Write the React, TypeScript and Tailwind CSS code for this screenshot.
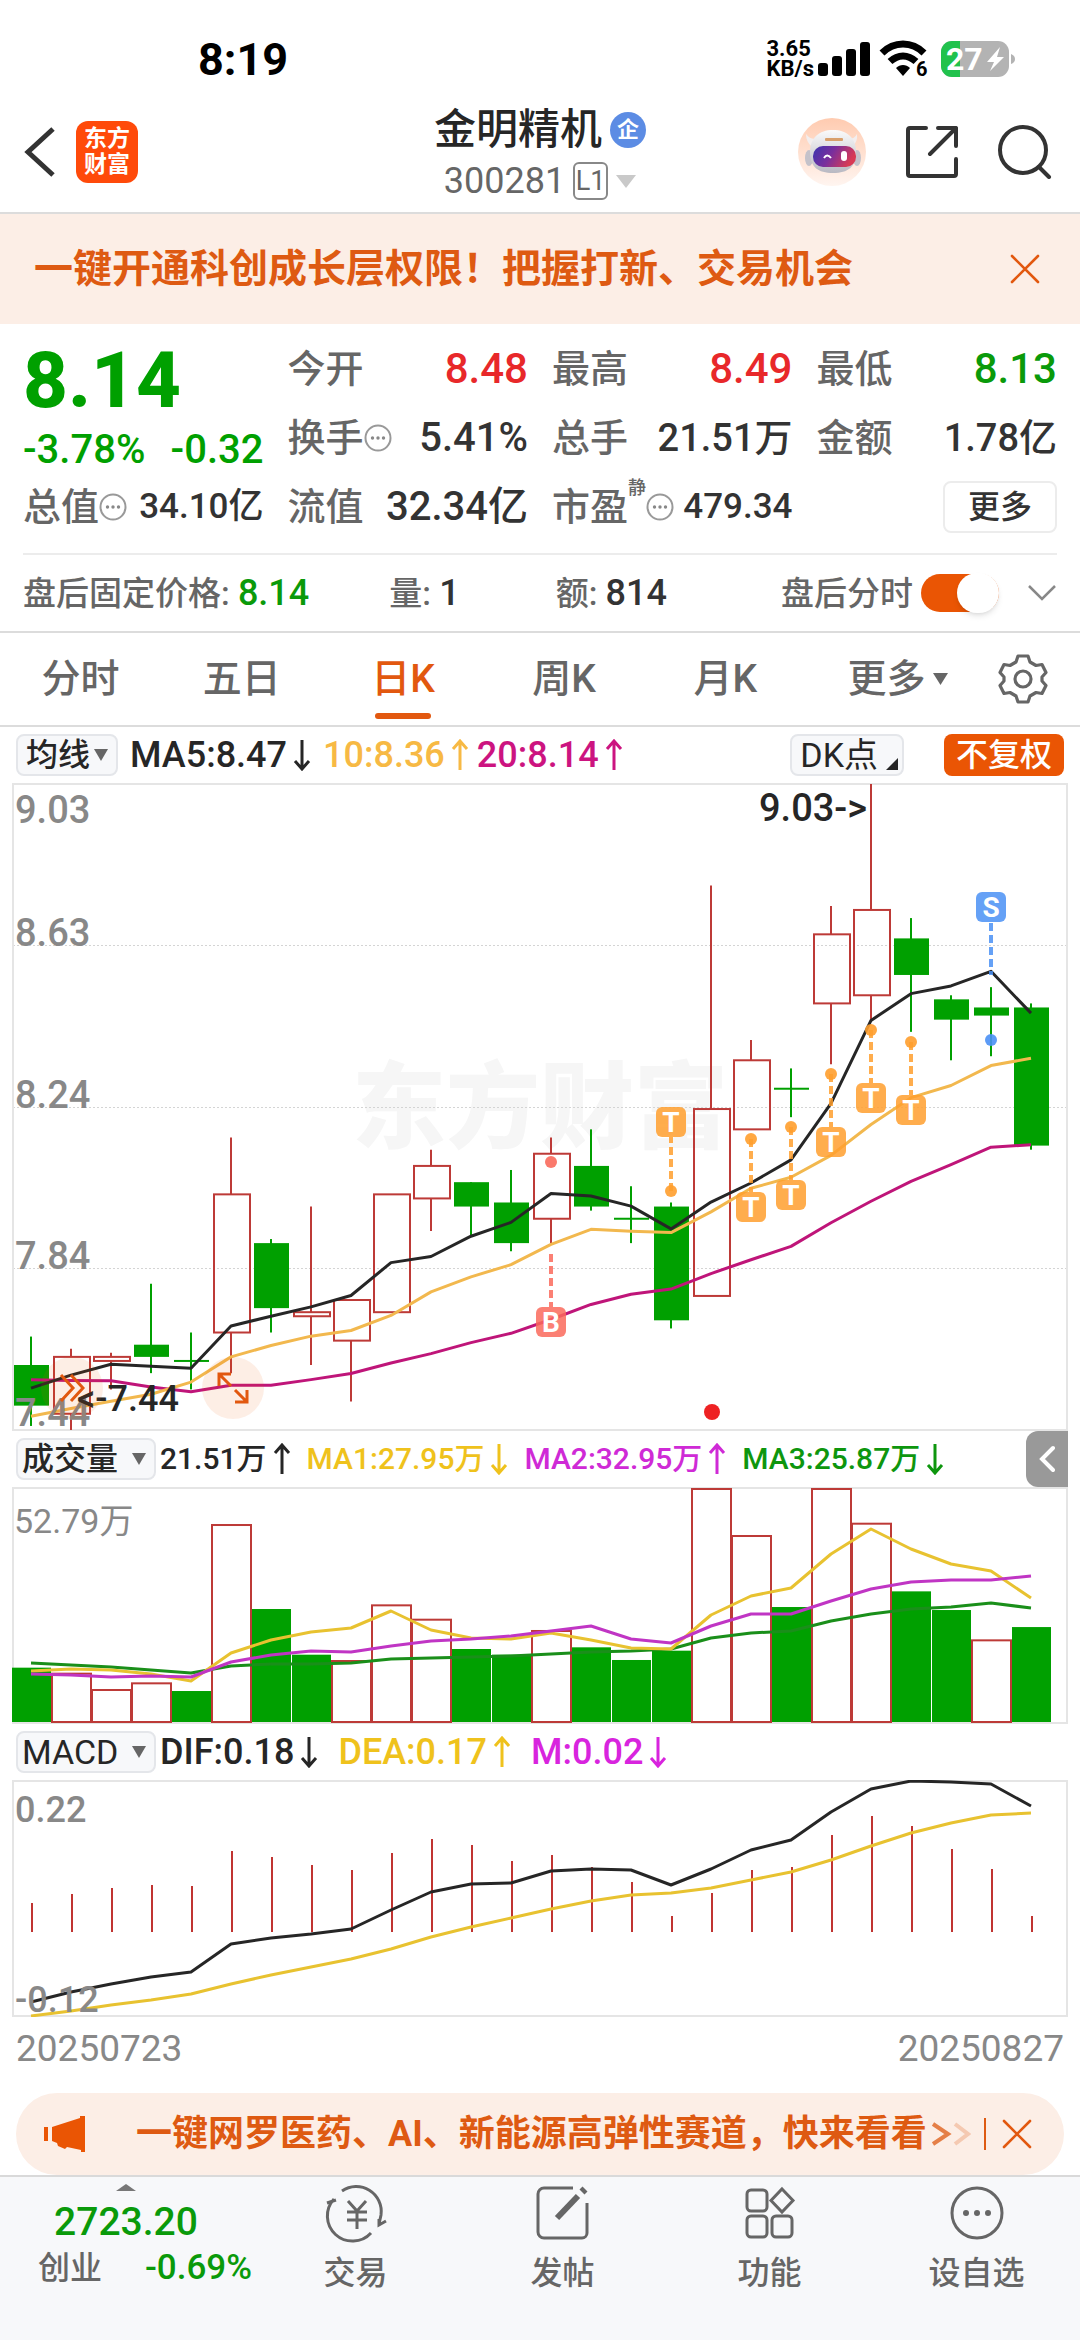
import type { ReactNode } from 'react'

const CANDLES = [
  // open, close, high, low
  [7.6, 7.5, 7.67, 7.45],
  [7.48, 7.62, 7.64, 7.44],
  [7.61, 7.62, 7.63, 7.54],
  [7.65, 7.62, 7.8, 7.58],
  [7.61, 7.61, 7.68, 7.54],
  [7.68, 8.02, 8.16, 7.58],
  [7.9, 7.74, 7.91, 7.68],
  [7.72, 7.73, 7.99, 7.6],
  [7.66, 7.76, 7.76, 7.51],
  [7.73, 8.02, 8.02, 7.73],
  [8.01, 8.09, 8.13, 7.93],
  [8.05, 7.99, 8.05, 7.92],
  [8.0, 7.9, 8.08, 7.88],
  [7.96, 8.12, 8.16, 7.9],
  [8.09, 7.99, 8.18, 7.98],
  [7.96, 7.96, 8.04, 7.9],
  [7.99, 7.71, 8.0, 7.69],
  [7.77, 8.23, 8.78, 7.77],
  [8.18, 8.35, 8.4, 8.18],
  [8.28, 8.28, 8.33, 8.21],
  [8.49, 8.66, 8.73, 8.34],
  [8.51, 8.72, 9.03, 8.45],
  [8.65, 8.56, 8.7, 8.42],
  [8.5, 8.45, 8.51, 8.35],
  [8.48, 8.46, 8.53, 8.36],
  [8.48, 8.14, 8.49, 8.13],
]

const MA5 = [7.543, 7.575, 7.602, 7.597, 7.592, 7.696, 7.72, 7.743, 7.771, 7.852, 7.867, 7.917, 7.951, 8.022, 8.016, 7.991, 7.935, 8.001, 8.048, 8.105, 8.244, 8.448, 8.514, 8.533, 8.569, 8.466]
const MA10 = [7.474, 7.493, 7.511, 7.528, 7.558, 7.62, 7.648, 7.671, 7.685, 7.722, 7.78, 7.817, 7.847, 7.897, 7.934, 7.929, 7.926, 7.977, 8.035, 8.062, 8.116, 8.192, 8.258, 8.288, 8.337, 8.355]
const MA20 = [7.564, 7.562, 7.561, 7.546, 7.534, 7.55, 7.55, 7.564, 7.579, 7.605, 7.628, 7.655, 7.678, 7.712, 7.749, 7.774, 7.787, 7.825, 7.859, 7.892, 7.95, 8.003, 8.052, 8.093, 8.136, 8.142]

const VOLUMES = [12.31, 10.95, 7.25, 8.76, 7.02, 44.63, 25.6, 15.25, 13.82, 26.43, 23.18, 16.54, 15.25, 20.62, 16.92, 14.05, 16.16, 52.79, 42.14, 26.05, 52.79, 44.93, 29.6, 25.37, 18.5, 21.51]
// volume bars take their colour from the previous close, not from the open
const VOLUME_UP = [1, 2, 3, 5, 8, 9, 10, 13, 17, 18, 20, 21, 24]
const VOL_MA1 = [183, 181, 182, 186, 193, 165, 152, 144, 140, 123, 142, 150, 151, 145, 152, 160, 161, 127, 108, 100, 66, 41, 61, 76, 83, 110]
const VOL_MA2 = [186, 187, 189, 188, 189, 174, 167, 163, 164, 158, 153, 151, 148, 143, 138, 151, 155, 138, 126, 126, 113, 101, 94, 92, 92, 88]
const VOL_MA3 = [175, 177, 179, 182, 185, 178, 176, 176, 175, 171, 170, 169, 168, 166, 164, 163, 161, 150, 145, 143, 133, 126, 121, 119, 115, 120]

const MACD_BARS = [123, 114, 108, 105, 106, 71, 77, 85, 90, 73, 59, 65, 81, 75, 87, 102, 136, 113, 90, 87, 55, 36, 46, 69, 89, 136]
const DIF = [221, 211, 203, 196, 191, 163, 157, 153, 148, 129, 111, 103, 102, 90, 88, 89, 104, 88, 69, 59, 31, 8, 0, 1, 3, 25]
const DEA = [235, 230, 224, 219, 213, 203, 194, 186, 178, 168, 156, 146, 137, 128, 120, 114, 112, 107, 99, 91, 79, 65, 52, 42, 34, 32]

const T_MARKS = [
  { i: 16, dot: 408, badge: 339 },
  { i: 18, dot: 356, badge: 424 },
  { i: 19, dot: 344, badge: 412 },
  { i: 20, dot: 291, badge: 359 },
  { i: 21, dot: 247, badge: 315 },
  { i: 22, dot: 259, badge: 327 },
]

const RED = '#bd3a37'
const GREEN = '#00a000'

const cx = (i: number) => 19 + i * 40
const py = (price: number) => 1 + (9.03 - price) * 406.3
const line = (ys: number[]) => ys.map((y, i) => `${cx(i)},${y + 1}`).join(' ')
const priceLine = (ps: number[]) => ps.map((p, i) => `${cx(i)},${py(p)}`).join(' ')

function Mark({ x, y, letter, color }: { x: number; y: number; letter: string; color: string }) {
  return (
    <g>
      <rect x={x - 15} y={y - 15} width="30" height="30" rx="6" fill={color} fillOpacity="0.85" />
      <text x={x} y={y + 10} textAnchor="middle" fontSize="28" fontWeight="700" fill="#fff">{letter}</text>
    </g>
  )
}

function Candle({ i }: { i: number }) {
  const [open, close, high, low] = CANDLES[i]
  const x = cx(i)
  const up = close > open
  const top = py(Math.max(open, close))
  const bottom = py(Math.min(open, close))
  if (!up) {
    return (
      <g fill={GREEN}>
        <rect x={x - 1} y={py(high)} width="2" height={py(low) - py(high)} />
        <rect x={x - 17} y={bottom - top < 2 ? top - 1 : top} width="35" height={Math.max(bottom - top, 2)} />
      </g>
    )
  }
  return (
    <g stroke={RED} strokeWidth="2" fill="none">
      <path d={`M${x} ${py(high)}V${top}M${x} ${bottom}V${py(low)}`} />
      <rect x={x - 17} y={top} width="36" height={bottom - top} />
    </g>
  )
}

function PriceChart() {
  return (
    <svg viewBox="0 0 1056 648" className="block w-full h-auto">
      <text x="340" y="358" fontSize="94" fontWeight="900" fill="#f6f6f6">东方财富</text>
      {[162, 324, 485].map(y => (
        <line key={y} x1="1" x2="1055" y1={y + 0.5} y2={y + 0.5} stroke="#d4d4d4" strokeDasharray="2 2" />
      ))}
      <rect x="1" y="1" width="1054" height="646" fill="none" stroke="#e5e5e5" strokeWidth="2" />
      {CANDLES.map((_, i) => <Candle key={i} i={i} />)}
      <g fill="none" strokeWidth="3" strokeLinejoin="round">
        <polyline points={priceLine(MA20)} stroke="#bf1579" />
        <polyline points={priceLine(MA10)} stroke="#f2b84e" />
        <polyline points={priceLine(MA5)} stroke="#262626" />
      </g>
      {T_MARKS.map(m => (
        <g key={m.i}>
          <line x1={cx(m.i)} x2={cx(m.i)} y1={m.dot} y2={m.badge > m.dot ? m.badge - 15 : m.badge + 15}
            stroke="#ff9f2e" strokeOpacity="0.85" strokeWidth="4" strokeDasharray="8 4" />
          <circle cx={cx(m.i)} cy={m.dot} r="6" fill="#ff9f2e" fillOpacity="0.9" />
          <Mark x={cx(m.i)} y={m.badge} letter="T" color="#ff9f2e" />
        </g>
      ))}
      <line x1={cx(24)} x2={cx(24)} y1="140" y2="192" stroke="#4a90f5" strokeOpacity="0.85" strokeWidth="4" strokeDasharray="8 4" />
      <circle cx={cx(24)} cy="257" r="6" fill="#4a90f5" fillOpacity="0.9" />
      <Mark x={cx(24)} y={124} letter="S" color="#4a90f5" />
      <line x1={cx(13)} x2={cx(13)} y1="471" y2="524" stroke="#fa6a5c" strokeOpacity="0.85" strokeWidth="4" strokeDasharray="8 4" />
      <circle cx={cx(13)} cy="379" r="6" fill="#fa6a5c" fillOpacity="0.9" />
      <Mark x={cx(13)} y={539} letter="B" color="#fa6a5c" />
      <circle cx="700" cy="629" r="8" fill="#ee2223" />
      <g fill="#888" fontSize="38" fontWeight="500">
        <text x="3" y="40">9.03</text>
        <text x="3" y="163">8.63</text>
        <text x="3" y="325">8.24</text>
        <text x="3" y="486">7.84</text>
        <text x="3" y="643">7.44</text>
      </g>
      <g fill="#262626" fontWeight="500">
        <text x="65" y="628" fontSize="36">&lt;-7.44</text>
        <text x="855" y="38" fontSize="38" textAnchor="end">9.03-&gt;</text>
      </g>
    </svg>
  )
}

function VolumeChart() {
  return (
    <svg viewBox="0 0 1056 237" className="block w-full h-auto">
      <rect x="1" y="1" width="1054" height="235" fill="none" stroke="#e5e5e5" strokeWidth="2" />
      {VOLUMES.map((v, i) => {
        const h = (v / 52.79) * 233
        return VOLUME_UP.includes(i)
          ? <rect key={i} x={i * 40} y={235 - h} width="39" height={h} fill="#fff" stroke={RED} strokeWidth="2" />
          : <rect key={i} x={i * 40} y={235 - h} width="39" height={h} fill={GREEN} />
      })}
      <g fill="none" strokeWidth="3" strokeLinejoin="round">
        <polyline points={line(VOL_MA3)} stroke="#1a8f1a" />
        <polyline points={line(VOL_MA1)} stroke="#e8c230" />
        <polyline points={line(VOL_MA2)} stroke="#c035c4" />
      </g>
      <text x="2" y="46" fontSize="34" fontWeight="400" fill="#888">52.79万</text>
    </svg>
  )
}

function MacdChart() {
  return (
    <svg viewBox="0 0 1056 237" className="block w-full h-auto">
      <rect x="1" y="1" width="1054" height="235" fill="none" stroke="#e5e5e5" strokeWidth="2" />
      {MACD_BARS.map((y, i) => (
        <rect key={i} x={cx(i)} y={y} width="2" height={152 - y} fill="#c03431" />
      ))}
      <g fill="none" strokeWidth="3" strokeLinejoin="round">
        <polyline points={line(DEA)} stroke="#e8c230" />
        <polyline points={line(DIF)} stroke="#262626" />
      </g>
      <g fill="#888" fontSize="36" fontWeight="500">
        <text x="3" y="42">0.22</text>
        <text x="3" y="232">-0.12</text>
      </g>
    </svg>
  )
}

function Arrow({ down = false }: { down?: boolean }) {
  return (
    <svg width="18" height="32" viewBox="0 0 18 32" fill="none" stroke="currentColor" strokeWidth="3"
      className={down ? 'shrink-0 rotate-180' : 'shrink-0'}>
      <path d="M9 31V2M2 10l7-8 7 8" />
    </svg>
  )
}

function Triangle({ className }: { className: string }) {
  return <svg viewBox="0 0 14 12" preserveAspectRatio="none" className={className} fill="currentColor"><path d="M0 0h14L7 12z" /></svg>
}

function InfoDots() {
  return (
    <svg width="28" height="28" viewBox="0 0 28 28" className="shrink-0">
      <circle cx="14" cy="14" r="12.5" fill="none" stroke="#999" strokeWidth="2" />
      <g fill="#888"><circle cx="8.5" cy="14" r="1.7" /><circle cx="14" cy="14" r="1.7" /><circle cx="19.5" cy="14" r="1.7" /></g>
    </svg>
  )
}

function Close({ className }: { className: string }) {
  return (
    <svg viewBox="0 0 30 30" className={className} fill="none" stroke="#e2580f" strokeWidth="2.6" strokeLinecap="round">
      <path d="M2 2l26 26M28 2L2 28" />
    </svg>
  )
}

function StatusBar() {
  return (
    <div className="flex h-[118px] items-center justify-between pl-[198px] pr-[63px] text-black">
      <span className="text-[45px] leading-none font-bold">8:19</span>
      <div className="flex items-center">
        <div className="text-[22px] leading-[20px] font-bold">
          <div>3.65</div>
          <div>KB/s</div>
        </div>
        <svg width="53" height="36" viewBox="0 0 53 36" className="ml-1">
          <rect x="0" y="22" width="10" height="13" rx="3" />
          <rect x="14" y="15" width="10" height="20" rx="3" />
          <rect x="28" y="8" width="10" height="27" rx="3" />
          <rect x="42" y="1" width="10" height="34" rx="3" />
        </svg>
        <svg width="50" height="38" viewBox="0 0 50 38" className="ml-2">
          <path d="M3 13C15 1 33 1 45 13" fill="none" stroke="#000" strokeWidth="7" />
          <path d="M11 21.500C19 14 29 14 37 21.500" fill="none" stroke="#000" strokeWidth="7" />
          <path d="M17 28c4-4 10-4 14 0l-7 8z" />
          <text x="37" y="36" fontSize="20" fontWeight="700">6</text>
        </svg>
        <svg width="76" height="38" viewBox="0 0 76 38" className="ml-3">
          <rect x="0" y="1" width="68" height="36" rx="11" fill="#b3b3b3" />
          <path d="M11 1h8v36h-8a11 11 0 0 1-11-11V12A11 11 0 0 1 11 1z" fill="#21c24d" />
          <path d="M70 14q4 1.500 4 5t-4 5z" fill="#b3b3b3" />
          <text x="5" y="30" fontSize="32" fontWeight="700" fill="#fff">27</text>
          <path d="M59 7L46 22h7l-4 9 14-14h-7z" fill="#fff" />
        </svg>
      </div>
    </div>
  )
}

function RobotAvatar() {
  return (
    <svg width="68" height="68" viewBox="0 0 68 68">
      <defs>
        <linearGradient id="halo" x1="0" y1="0" x2="0" y2="1">
          <stop offset="0" stopColor="#ffcbb0" /><stop offset="1" stopColor="#fff5f0" />
        </linearGradient>
        <linearGradient id="visor" x1="0" y1="0" x2="1" y2="0.3">
          <stop offset="0" stopColor="#3b35b0" /><stop offset="0.5" stopColor="#7a2f9c" /><stop offset="1" stopColor="#d83a55" />
        </linearGradient>
        <linearGradient id="shell" x1="0" y1="0" x2="0" y2="1">
          <stop offset="0" stopColor="#fafafa" /><stop offset="1" stopColor="#b9b9c2" />
        </linearGradient>
      </defs>
      <circle cx="34" cy="34" r="34" fill="url(#halo)" />
      <path d="M8 16q0 8 6 13l7-9q-8 3-13-4zM59 16q1 8-5 13l-7-9q8 3 12-4z" fill="#f3eeee" />
      <ellipse cx="11" cy="40" rx="4" ry="8" fill="#c4c2ca" />
      <ellipse cx="59" cy="40" rx="4" ry="8" fill="#c4c2ca" />
      <path d="M12 34c0-14 9-22 23-22s23 8 23 22c0 15-8 21-23 21s-23-6-23-21z" fill="url(#shell)" />
      <rect x="27" y="20" width="18" height="3" rx="1" fill="#d9a06c" />
      <rect x="15" y="28" width="43" height="21" rx="10" fill="url(#visor)" />
      <path d="M26 40q3-5 7 0" fill="none" stroke="#fff" strokeWidth="2" />
      <rect x="43" y="33" width="6" height="10" rx="3" fill="#fff" />
    </svg>
  )
}

function Header() {
  return (
    <header className="grid h-24 grid-cols-[1fr_auto_1fr] items-start border-b-2 border-[#dcdcdc] px-6">
      <div className="flex items-center gap-5 pt-[3px]">
        <button aria-label="返回">
          <svg width="32" height="50" viewBox="0 0 32 50" fill="none" stroke="#333" strokeWidth="5"><path d="M29 2L4 25l25 23" /></svg>
        </button>
        <div className="flex h-[62px] w-[62px] flex-col items-center justify-center rounded-xl bg-[#ff4a0a] text-[23px] leading-[26px] font-bold text-white">
          <span>东方</span>
          <span>财富</span>
        </div>
      </div>
      <div className="flex flex-col items-center">
        <h1 className="flex h-6 items-center gap-2 text-[42px] leading-none font-medium text-[#262626]">
          金明精机
          <span className="flex h-9 w-9 items-center justify-center rounded-full bg-[#5c8ce4] text-[22px] leading-none font-bold text-white">企</span>
        </h1>
        <button className="mt-5 flex items-center gap-2 text-[36px] leading-[38px] text-[#666]">
          300281
          <span className="flex h-[38px] w-[35px] items-center justify-center rounded-md border-2 border-[#888] text-[27px] leading-none">L1</span>
          <Triangle className="h-[13px] w-5 text-[#c9c9c9]" />
        </button>
      </div>
      <div className="flex items-center justify-end gap-10 pr-1">
        <button aria-label="智能助手"><RobotAvatar /></button>
        <button aria-label="分享">
          <svg width="52" height="52" viewBox="0 0 52 52" fill="none" stroke="#333" strokeWidth="4" strokeLinecap="round" strokeLinejoin="round">
            <path d="M20 2H4a2 2 0 0 0-2 2v44a2 2 0 0 0 2 2h44a2 2 0 0 0 2-2V33M32 2h18v18M50 2L24 28" />
          </svg>
        </button>
        <button aria-label="搜索">
          <svg width="54" height="54" viewBox="0 0 54 54" fill="none" stroke="#333" strokeWidth="4" strokeLinecap="round">
            <circle cx="25" cy="25" r="23" /><path d="M41 42l10 10" />
          </svg>
        </button>
      </div>
    </header>
  )
}

function Stat({ label, info = false, note, children }: { label: string; info?: boolean; note?: string; children: ReactNode }) {
  return (
    <div className="flex items-center justify-between">
      <div className="flex items-center text-[38px] text-[#666]">
        {label}
        {note && <sup className="self-start text-[18px] leading-none">{note}</sup>}
        {info && <InfoDots />}
      </div>
      {children}
    </div>
  )
}

function Quote() {
  return (
    <section className="px-[23px] pt-[10px] leading-none font-medium text-[#333]">
      <div className="grid auto-rows-[69px] grid-cols-4 gap-x-6">
        <div className="row-span-2 flex flex-col justify-between pt-2 text-[#00a000]">
          <div className="text-[78px] leading-[78px] font-extrabold">8.14</div>
          <div className="flex justify-between text-[40px] leading-[44px]"><span>-3.78%</span><span>-0.32</span></div>
        </div>
        <Stat label="今开"><span className="text-[42px] text-[#e8282a]">8.48</span></Stat>
        <Stat label="最高"><span className="text-[42px] text-[#e8282a]">8.49</span></Stat>
        <Stat label="最低"><span className="text-[42px] text-[#0a9a0a]">8.13</span></Stat>
        <Stat label="换手" info><span className="text-[40px]">5.41%</span></Stat>
        <Stat label="总手"><span className="text-[38px]">21.51万</span></Stat>
        <Stat label="金额"><span className="text-[38px]">1.78亿</span></Stat>
        <Stat label="总值" info><span className="text-[35px]">34.10亿</span></Stat>
        <Stat label="流值"><span className="text-[40px]">32.34亿</span></Stat>
        <Stat label="市盈" note="静" info><span className="text-[35px]">479.34</span></Stat>
        <div className="flex items-center justify-end">
          <button className="h-[52px] w-[114px] rounded-lg border-2 border-[#ececec] text-[32px]">更多</button>
        </div>
      </div>
      <div className="mt-3 flex h-[78px] items-center border-t-2 border-[#ececec] text-[33px] text-[#666]">
        <div>盘后固定价格: <span className="text-[36px] text-[#0a9a0a]">8.14</span></div>
        <div className="ml-20">量: <span className="text-[36px] text-[#333]">1</span></div>
        <div className="ml-24">额: <span className="text-[36px] text-[#333]">814</span></div>
        <label className="ml-auto flex items-center gap-2">
          盘后分时
          <input type="checkbox" defaultChecked className="peer sr-only" />
          <span className="flex h-[38px] w-[78px] items-center justify-end rounded-full bg-[#ea5504]">
            <span className="h-10 w-[42px] rounded-full bg-white shadow-md" />
          </span>
        </label>
        <button aria-label="展开" className="ml-7">
          <svg width="30" height="20" viewBox="0 0 30 20" fill="none" stroke="#888" strokeWidth="2.500"><path d="M2 3l13 13L28 3" /></svg>
        </button>
      </div>
    </section>
  )
}

const PERIODS = ['分时', '五日', '日K', '周K', '月K']

function PeriodTabs() {
  return (
    <nav className="grid h-24 grid-cols-[repeat(5,minmax(0,1fr))_184px_90px] items-stretch border-y-2 border-[#dcdcdc] text-[39px] leading-none font-medium text-[#666]">
      {PERIODS.map(p => (
        <button key={p} className={p === '日K' ? 'relative text-[#e2580f]' : ''}>
          {p}
          {p === '日K' && <span className="absolute bottom-[6px] left-1/2 h-[6px] w-14 -translate-x-1/2 rounded-full bg-[#e2580f]" />}
        </button>
      ))}
      <button className="flex items-center justify-center gap-2">更多<Triangle className="h-3 w-[15px]" /></button>
      <button aria-label="设置" className="pl-2">
        <svg width="50" height="50" viewBox="0 0 50 50" fill="none" stroke="#666" strokeWidth="3.200" strokeLinejoin="round">
          <path d="M20 2h10l2 6 6 3.500 6-1 4 8-4 4.500v4l4 4.500-4 8-6-1-6 3.500-2 6H20l-2-6-6-3.500-6 1-4-8 4-4.500v-4l-4-4.500 4-8 6 1L18 8z" />
          <circle cx="25" cy="25" r="8" />
        </svg>
      </button>
    </nav>
  )
}

function IndicatorRow({ children }: { children: ReactNode }) {
  return <div className="flex h-14 items-center px-4 text-[36px] leading-none font-medium text-[#262626]">{children}</div>
}

function IndicatorButton({ children, className = '' }: { children: ReactNode; className?: string }) {
  return (
    <button className={`flex h-[42px] shrink-0 items-center rounded-lg border-2 border-[#e4e6ea] bg-[#f7f8fa] text-[32px] leading-none text-[#262626] ${className}`}>
      {children}
    </button>
  )
}

function Reading({ className = '', down, children }: { className?: string; down?: boolean; children: ReactNode }) {
  return <span className={`flex items-center gap-[6px] whitespace-nowrap ${className}`}>{children}<Arrow down={down} /></span>
}

function Charts() {
  return (
    <main>
      <IndicatorRow>
        <IndicatorButton className="mr-3 gap-1 px-2">均线<Triangle className="h-3 w-[14px] text-[#666]" /></IndicatorButton>
        <Reading down className="mr-3">MA5:8.47</Reading>
        <Reading className="mr-2 text-[#f7b944]">10:8.36</Reading>
        <Reading className="text-[#cc1480]">20:8.14</Reading>
        <IndicatorButton className="ml-auto gap-2 pr-1 pl-2">
          <span className="text-[34px] font-normal">DK点</span>
          <svg width="12" height="12" viewBox="0 0 12 12" className="mb-1 self-end"><path d="M12 0v12H0z" fill="#262626" /></svg>
        </IndicatorButton>
        <button className="ml-10 h-[42px] rounded-lg bg-[#ea5504] px-3 text-[32px] leading-none text-white">不复权</button>
      </IndicatorRow>
      <div className="relative mx-3">
        <PriceChart />
        <button aria-label="快进" className="absolute bottom-[12px] left-[29px] flex h-[62px] w-[62px] items-center justify-center rounded-full bg-[#ea5504]/10">
          <svg width="26" height="30" viewBox="0 0 26 30" fill="none" stroke="#e2580f" strokeWidth="3"><path d="M2 2l12 13L2 28M12 2l12 13-12 13" /></svg>
        </button>
        <button aria-label="全屏" className="absolute bottom-[12px] left-[190px] flex h-[62px] w-[62px] items-center justify-center rounded-full bg-[#ea5504]/10">
          <svg width="32" height="32" viewBox="0 0 32 32" fill="none" stroke="#e2580f" strokeWidth="3">
            <path d="M2 14V2h12M2 2l12 12M30 18v12H18M30 30L18 18" />
          </svg>
        </button>
      </div>
      <div className="relative">
        <IndicatorRow>
          <IndicatorButton className="mr-1 w-[140px] justify-between px-1">成交量<Triangle className="mr-1 h-3 w-[14px] text-[#666]" /></IndicatorButton>
          <div className="flex items-center gap-4 text-[30px]">
            <Reading>21.51万</Reading>
            <Reading down className="text-[#efc21c]">MA1:27.95万</Reading>
            <Reading className="text-[#cf2ad6]">MA2:32.95万</Reading>
            <Reading down className="text-[#0e960e]">MA3:25.87万</Reading>
          </div>
        </IndicatorRow>
        <button aria-label="收起" className="absolute top-0 right-3 flex h-14 w-[42px] items-center justify-center rounded-l-xl bg-[#999]">
          <svg width="16" height="28" viewBox="0 0 16 28" fill="none" stroke="#fff" strokeWidth="4" strokeLinecap="round"><path d="M14 3L3 14l11 11" /></svg>
        </button>
      </div>
      <div className="mx-3"><VolumeChart /></div>
      <IndicatorRow>
        <IndicatorButton className="mr-1 w-[140px] justify-between px-1"><span className="text-[34px] font-normal">MACD</span><Triangle className="mr-1 h-3 w-[14px] text-[#666]" /></IndicatorButton>
        <Reading down className="mr-5">DIF:0.18</Reading>
        <Reading className="mr-5 text-[#efc21c]">DEA:0.17</Reading>
        <Reading down className="text-[#d824de]">M:0.02</Reading>
      </IndicatorRow>
      <div className="mx-3"><MacdChart /></div>
      <div className="flex h-[76px] justify-between px-4 pt-[14px] text-[37px] leading-[36px] text-[#888]">
        <span>20250723</span>
        <span>20250827</span>
      </div>
    </main>
  )
}

function PromoBar() {
  return (
    <div className="mx-4 flex h-[82px] items-center rounded-full bg-[#fceee6] pr-8 pl-7 text-[#de5a12]">
      <svg width="42" height="38" viewBox="0 0 42 38" fill="#ea5504">
        <path d="M0 12h4v14H0zM8 12L36 3V1h5v36h-4v-2l-14-3-2 2-7-3-1-3-5-2z" />
      </svg>
      <a href="#promo" className="ml-[50px] text-[36px] leading-none font-bold whitespace-nowrap">一键网罗医药、AI、新能源高弹性赛道，快来看看</a>
      <svg width="40" height="26" viewBox="0 0 40 26" fill="none" stroke="#de5a12" strokeWidth="4" className="ml-1">
        <path d="M2 3l15 10L2 23" opacity="0.75" />
        <path d="M24 3l13 10-13 10" opacity="0.25" />
      </svg>
      <span className="ml-auto h-8 w-[2px] bg-[#de5a12]" />
      <button aria-label="关闭" className="ml-4"><Close className="h-[30px] w-[30px]" /></button>
    </div>
  )
}

const NAV = [
  {
    label: '交易',
    icon: (
      <>
        <path d="M14 6a25 25 0 0 1 39 24l-2 9M43 48A25 25 0 0 1 6 14M-1 18l9-3M58 36l-7 4v-6" />
        <path d="M20 16l9 10 9-10M29 26v18M19 27h20M19 35h20" />
      </>
    ),
  },
  {
    label: '发帖',
    icon: (
      <>
        <path d="M38 3H9a6 6 0 0 0-6 6v38a6 6 0 0 0 6 6h38a5 5 0 0 0 5-5V18" />
        <path d="M22 33L43 11" strokeWidth="6" /><path d="M47 7l3-3" strokeWidth="7" />
      </>
    ),
  },
  {
    label: '功能',
    icon: (
      <>
        <rect x="5" y="5" width="20" height="21" rx="4" /><rect x="5" y="31" width="20" height="21" rx="4" />
        <rect x="30" y="31" width="20" height="21" rx="4" /><path d="M40 4l11 11.500L40 27 29 15.500z" />
      </>
    ),
  },
  {
    label: '设自选',
    icon: (
      <>
        <circle cx="28" cy="28" r="25" />
        <g fill="#666" stroke="none"><circle cx="17" cy="28" r="3" /><circle cx="28" cy="28" r="3" /><circle cx="39" cy="28" r="3" /></g>
      </>
    ),
  },
]

function BottomNav() {
  return (
    <footer className="grid h-[165px] grid-cols-[252px_repeat(4,minmax(0,1fr))] border-t-2 border-[#d9d9d9] bg-[#f7f8fa] leading-none text-[#666]">
      <button className="flex flex-col items-center justify-start pt-[7px] font-medium text-[#0a9a0a]">
        <Triangle className="h-[7px] w-5 rotate-180 text-[#777]" />
        <span className="mt-3 text-[39px]">2723.20</span>
        <span className="mt-2 flex w-full items-center justify-between pl-[38px] text-[35px]">
          <span className="text-[32px] text-[#666]">创业</span>-0.69%
        </span>
      </button>
      {NAV.map(item => (
        <button key={item.label} className="flex flex-col items-center gap-4 pt-2 text-[32px] font-medium">
          <svg width="56" height="56" viewBox="0 0 56 56" fill="none" stroke="#666" strokeWidth="3" className="overflow-visible">{item.icon}</svg>
          {item.label}
        </button>
      ))}
    </footer>
  )
}

export default function App() {
  return (
    <div className="min-h-screen w-full overflow-x-hidden bg-white font-['Roboto','Noto_Sans_CJK_SC',sans-serif]">
      <StatusBar />
      <Header />
      <div className="flex h-[110px] items-center justify-between bg-[#fceee6] pr-10 pl-[34px]">
        <a href="#open" className="text-[39px] leading-none font-bold whitespace-nowrap text-[#de5a12]">一键开通科创成长层权限！把握打新、交易机会</a>
        <button aria-label="关闭"><Close className="h-[30px] w-[30px]" /></button>
      </div>
      <Quote />
      <PeriodTabs />
      <Charts />
      <PromoBar />
      <BottomNav />
    </div>
  )
}
